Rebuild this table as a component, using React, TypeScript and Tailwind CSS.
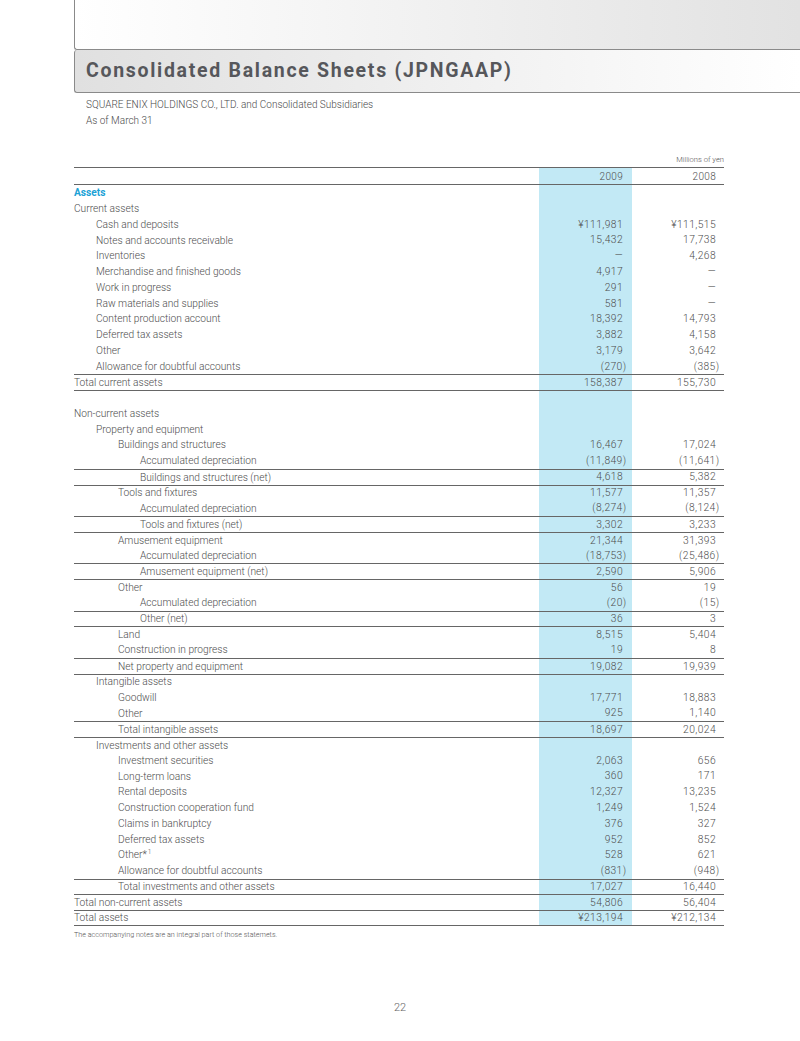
import React from "react";

type Row = { l: string; i: number; a?: string; b?: string; t?: boolean; bb?: boolean; h?: boolean; sup?: boolean };

const rows: Row[] = [
  { l: "Assets", i: 0, h: true },
  { l: "Current assets", i: 0 },
  { l: "Cash and deposits", i: 1, a: "¥111,981", b: "¥111,515" },
  { l: "Notes and accounts receivable", i: 1, a: "15,432", b: "17,738" },
  { l: "Inventories", i: 1, a: "—", b: "4,268" },
  { l: "Merchandise and finished goods", i: 1, a: "4,917", b: "—" },
  { l: "Work in progress", i: 1, a: "291", b: "—" },
  { l: "Raw materials and supplies", i: 1, a: "581", b: "—" },
  { l: "Content production account", i: 1, a: "18,392", b: "14,793" },
  { l: "Deferred tax assets", i: 1, a: "3,882", b: "4,158" },
  { l: "Other", i: 1, a: "3,179", b: "3,642" },
  { l: "Allowance for doubtful accounts", i: 1, a: "(270)", b: "(385)" },
  { l: "Total current assets", i: 0, a: "158,387", b: "155,730", t: true },
  { l: "", i: 0, t: true },
  { l: "Non-current assets", i: 0 },
  { l: "Property and equipment", i: 1 },
  { l: "Buildings and structures", i: 2, a: "16,467", b: "17,024" },
  { l: "Accumulated depreciation", i: 3, a: "(11,849)", b: "(11,641)" },
  { l: "Buildings and structures (net)", i: 3, a: "4,618", b: "5,382", t: true },
  { l: "Tools and fixtures", i: 2, a: "11,577", b: "11,357", t: true },
  { l: "Accumulated depreciation", i: 3, a: "(8,274)", b: "(8,124)" },
  { l: "Tools and fixtures (net)", i: 3, a: "3,302", b: "3,233", t: true },
  { l: "Amusement equipment", i: 2, a: "21,344", b: "31,393", t: true },
  { l: "Accumulated depreciation", i: 3, a: "(18,753)", b: "(25,486)" },
  { l: "Amusement equipment (net)", i: 3, a: "2,590", b: "5,906", t: true },
  { l: "Other", i: 2, a: "56", b: "19", t: true },
  { l: "Accumulated depreciation", i: 3, a: "(20)", b: "(15)" },
  { l: "Other (net)", i: 3, a: "36", b: "3", t: true },
  { l: "Land", i: 2, a: "8,515", b: "5,404", t: true },
  { l: "Construction in progress", i: 2, a: "19", b: "8" },
  { l: "Net property and equipment", i: 2, a: "19,082", b: "19,939", t: true },
  { l: "Intangible assets", i: 1, t: true },
  { l: "Goodwill", i: 2, a: "17,771", b: "18,883" },
  { l: "Other", i: 2, a: "925", b: "1,140" },
  { l: "Total intangible assets", i: 2, a: "18,697", b: "20,024", t: true },
  { l: "Investments and other assets", i: 1, t: true },
  { l: "Investment securities", i: 2, a: "2,063", b: "656" },
  { l: "Long-term loans", i: 2, a: "360", b: "171" },
  { l: "Rental deposits", i: 2, a: "12,327", b: "13,235" },
  { l: "Construction cooperation fund", i: 2, a: "1,249", b: "1,524" },
  { l: "Claims in bankruptcy", i: 2, a: "376", b: "327" },
  { l: "Deferred tax assets", i: 2, a: "952", b: "852" },
  { l: "Other*", i: 2, a: "528", b: "621", sup: true },
  { l: "Allowance for doubtful accounts", i: 2, a: "(831)", b: "(948)" },
  { l: "Total investments and other assets", i: 2, a: "17,027", b: "16,440", t: true },
  { l: "Total non-current assets", i: 0, a: "54,806", b: "56,404", t: true },
  { l: "Total assets", i: 0, a: "¥213,194", b: "¥212,134", t: true, bb: true },
];

const indent = ["pl-0", "pl-[22px]", "pl-[44px]", "pl-[66px]"];

function Num({ v }: { v?: string }) {
  if (!v) return null;
  const neg = v.startsWith("(");
  return <span className={neg ? "mr-[-3.5px]" : ""}>{v}</span>;
}

export default function App() {
  return (
    <div className="w-[800px] h-[1041px] bg-white font-['Roboto','Liberation_Sans',sans-serif] text-[#4e4e4e]">
      <div className="ml-[74px] h-[50px] border-l border-b border-[#8a8a8a] rounded-bl-[3px] bg-gradient-to-r from-white to-[#e2e2e2]" />
      <div className="ml-[74px] h-[43px] border-l border-b border-[#8a8a8a] rounded-l-[3px] bg-gradient-to-r from-[#e0e0e0] to-white flex items-center pl-[11px]">
        <h1 className="text-[19.5px] font-bold tracking-[1.7px] text-[#56575b] leading-none">
          Consolidated Balance Sheets (JPNGAAP)
        </h1>
      </div>
      <div className="pl-[86px] pt-[4px] text-[10px] leading-[16px] font-light text-[#4a4a4a]">
        <div>SQUARE ENIX HOLDINGS CO., LTD. and Consolidated Subsidiaries</div>
        <div>As of March 31</div>
      </div>
      <div className="mx-[74px] w-[650px]">
        <div className="mt-[24px] h-[14px] leading-[14px] text-right text-[7.6px] font-light text-[#555]">
          Millions of yen
        </div>
        <div className="flex h-[18px] border-t border-b border-[#666] text-[10px] font-light tracking-[0.3px]">
          <div className="flex-1" />
          <div className="w-[93px] bg-[#c2e9f5] flex items-center justify-end pr-[9px]">2009</div>
          <div className="w-[92px] flex items-center justify-end pr-[8px]">2008</div>
        </div>
        {rows.map((r, idx) => (
          <div
            key={idx}
            className={`flex h-[15.78px] font-light ${r.t ? "border-t border-[#666]" : ""} ${r.bb ? "border-b border-[#666]" : ""}`}
          >
            <div
              className={`flex-1 flex items-center text-[10.2px] ${indent[r.i]} ${r.h ? "text-[#1ba2d6] font-bold" : ""}`}
            >
              {r.l}
              {r.sup && <sup className="text-[6.5px] ml-[1px] top-[-3px]">1</sup>}
            </div>
            <div className="w-[93px] bg-[#c2e9f5] flex items-center justify-end pr-[9px] text-[10.3px] tracking-[0.4px] tabular-nums">
              <Num v={r.a} />
            </div>
            <div className="w-[92px] flex items-center justify-end pr-[8px] text-[10.3px] tracking-[0.4px] tabular-nums">
              <Num v={r.b} />
            </div>
          </div>
        ))}
        <div className="mt-[2px] h-[14px] leading-[14px] text-[7.2px] font-light text-[#555]">
          The accompanying notes are an integral part of those statemets.
        </div>
      </div>
      <div className="mt-[59px] h-[14px] leading-[14px] text-center text-[11px] font-light text-[#666]">22</div>
    </div>
  );
}
